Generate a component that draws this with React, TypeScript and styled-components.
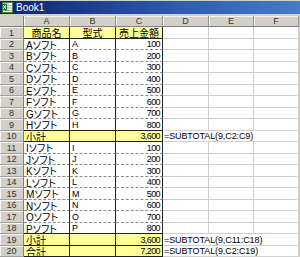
import styled, { createGlobalStyle } from 'styled-components';

const GlobalStyle = createGlobalStyle`
  html, body {
    margin: 0;
    padding: 0;
    background: #d4d0c8;
  }

  body {
    width: 300px;
    height: 257px;
    overflow: hidden;
    font-family: "Liberation Sans", "Noto Sans CJK JP", sans-serif;
  }
`;

type Line = 'grid' | 'solid' | 'dash' | 'none';

const lines: Record<Line, string> = {
  grid: '1px solid #d0d0d0',
  solid: '1px solid #202020',
  dash: '1px dashed #8a8a8a',
  none: '0',
};

const Window = styled.div`
  width: 300px;
  height: 257px;
  display: flex;
  flex-direction: column;
  background: #d4d0c8;
  overflow: hidden;
`;

const TitleBar = styled.div`
  margin: 1px 0 2px;
  height: 13px;
  display: flex;
  align-items: center;
  gap: 3px;
  padding-left: 2px;
  background: linear-gradient(to right, #0a246a, #2f5cae 60%, #4a7cc4);
  color: #fff;
  font-size: 10px;
  line-height: 13px;
`;

const Sheet = styled.div`
  display: grid;
  grid-template-columns: 24px 46px 46px 47px 46px 45px 45px;
  grid-template-rows: 11px repeat(10, 12px 11px);
  background: #fff;
  width: 299px;
`;

const Corner = styled.div`
  box-sizing: border-box;
  background: #d4d0c8;
  border-right: 1px solid #808080;
  border-bottom: 1px solid #808080;
`;

const ColHeader = styled.div`
  box-sizing: border-box;
  background: #d4d0c8;
  border-right: 1px solid #909090;
  border-bottom: 1px solid #808080;
  box-shadow: inset 1px 1px 0 #f4f4f4;
  display: flex;
  align-items: center;
  justify-content: center;
  font-size: 9px;
  color: #333;
`;

const RowHeader = styled(ColHeader)`
  border-right: 1px solid #808080;
  border-bottom: 1px solid #a0a0a0;
  font-size: 9px;
`;

interface CellProps {
  $fill?: boolean;
  $align?: 'flex-start' | 'center' | 'flex-end';
  $right?: Line;
  $bottom?: Line;
  $num?: boolean;
  $span?: number;
}

const Cell = styled.div<CellProps>`
  box-sizing: border-box;
  grid-column: ${(p) => (p.$span ? `span ${p.$span}` : 'auto')};
  background: ${(p) => (p.$fill ? '#ffff99' : '#fff')};
  border-right: ${(p) => lines[p.$right ?? 'grid']};
  border-bottom: ${(p) => lines[p.$bottom ?? 'grid']};
  padding: 0 2px;
  display: flex;
  align-items: center;
  justify-content: ${(p) => p.$align ?? 'flex-start'};
  white-space: nowrap;
  overflow: hidden;
  font-size: ${(p) => (p.$num ? '9px' : '10px')};
  letter-spacing: ${(p) => (p.$num ? '-0.6px' : '0')};
  font-feature-settings: "palt";
  color: #000;
`;

const Formula = styled(Cell)`
  font-size: 9px;
  letter-spacing: -0.1px;
  padding-left: 1px;
`;

const ExcelIcon = () => (
  <svg width="11" height="11" viewBox="0 0 11 11">
    <rect x="0.5" y="0.5" width="10" height="10" fill="#fff" stroke="#5a7a5a" />
    <path d="M3 3.5h7M3 6h7M3 8.5h7M6 1v9" stroke="#7fae7f" strokeWidth="0.8" />
    <rect x="0" y="1.5" width="5" height="7" fill="#1d7a2e" />
    <path d="M1 3l3 4M4 3l-3 4" stroke="#fff" strokeWidth="1" />
  </svg>
);

interface Row {
  a: string;
  b: string;
  c: string;
  formula?: string;
  fill?: boolean;
  bottom: Line;
}

const letters = 'ABCDEFGHIJKLMNOP';

const buildRows = (): Row[] => {
  const rows: Row[] = [{ a: '商品名', b: '型式', c: '売上金額', fill: true, bottom: 'solid' }];
  for (let i = 0; i < 8; i += 1) {
    rows.push({ a: `${letters[i]}ソフト`, b: letters[i], c: String((i + 1) * 100), bottom: i === 7 ? 'solid' : 'dash' });
  }
  rows.push({ a: '小計', b: '', c: '3,600', formula: '=SUBTOTAL(9,C2:C9)', fill: true, bottom: 'solid' });
  for (let i = 8; i < 16; i += 1) {
    rows.push({ a: `${letters[i]}ソフト`, b: letters[i], c: String((i - 7) * 100), bottom: i === 15 ? 'solid' : 'dash' });
  }
  rows.push({ a: '小計', b: '', c: '3,600', formula: '=SUBTOTAL(9,C11:C18)', fill: true, bottom: 'solid' });
  rows.push({ a: '合計', b: '', c: '7,200', formula: '=SUBTOTAL(9,C2:C19)', fill: true, bottom: 'solid' });
  return rows;
};

const rows = buildRows();

const App = () => (
  <Window>
    <GlobalStyle />
    <TitleBar>
      <ExcelIcon />
      <span>Book1</span>
    </TitleBar>
    <Sheet>
      <Corner />
      {['A', 'B', 'C', 'D', 'E', 'F'].map((col) => (
        <ColHeader key={col}>{col}</ColHeader>
      ))}
      {rows.map((row, index) => {
        const first = index === 0;
        return [
          <RowHeader key={`h${index}`}>{index + 1}</RowHeader>,
          <Cell key={`a${index}`} $fill={row.fill} $right="solid" $bottom={row.bottom} $align={first ? 'center' : 'flex-start'}>
            {row.a}
          </Cell>,
          <Cell key={`b${index}`} $fill={row.fill} $right="solid" $bottom={row.bottom} $align={first ? 'center' : 'flex-start'} $num={!first}>
            {row.b}
          </Cell>,
          <Cell key={`c${index}`} $fill={row.fill} $right="solid" $bottom={row.bottom} $align={first ? 'center' : 'flex-end'} $num={!first}>
            {row.c}
          </Cell>,
          row.formula ? (
            <Formula key={`d${index}`} $span={3}>{row.formula}</Formula>
          ) : (
            [<Cell key={`d${index}`} />, <Cell key={`e${index}`} />, <Cell key={`f${index}`} />]
          ),
        ];
      })}
    </Sheet>
  </Window>
);

export default App;
